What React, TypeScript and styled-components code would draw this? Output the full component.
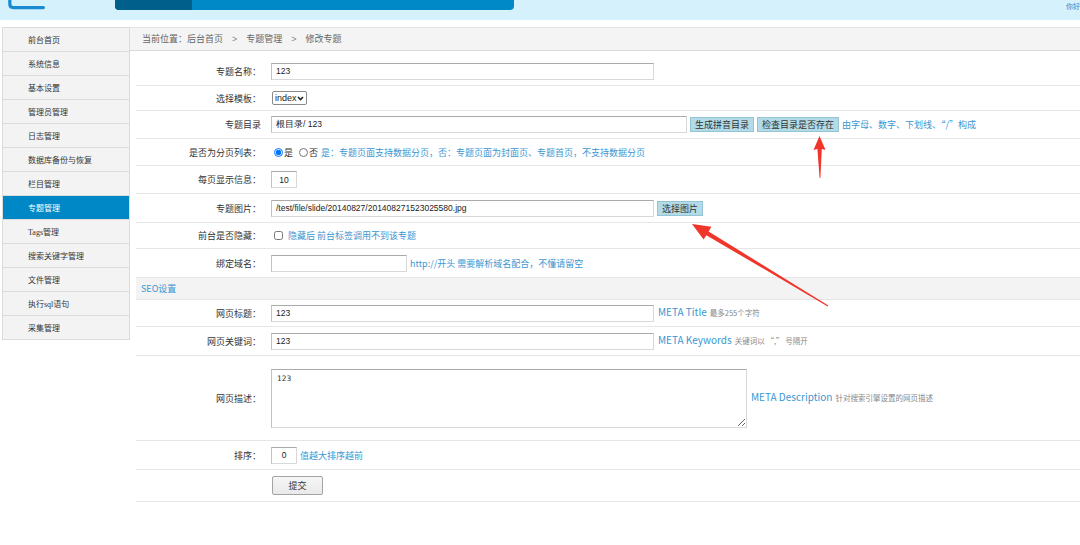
import React from "react";
import styled, { createGlobalStyle } from "styled-components";

const GlobalStyle = createGlobalStyle`
  html, body { margin: 0; padding: 0; background: #fff; }
  body {
    font-family: "Noto Sans CJK SC", "Liberation Sans", sans-serif;
    color: #333;
    width: 1080px;
    height: 545px;
    overflow: hidden;
  }
  * { box-sizing: border-box; }
`;

const Page = styled.div`
  position: relative;
  width: 1080px;
  height: 545px;
  overflow: hidden;
`;

const Header = styled.header`
  height: 20px;
  background: #d4f1fc;
  display: flex;
  align-items: flex-start;
`;

const Logo = styled.svg`
  margin-left: 8px;
  flex: none;
`;

const NavBar = styled.div`
  margin-left: 67px;
  width: 399px;
  height: 10px;
  background: #0089c7;
  border-radius: 0 0 4px 4px;
  display: flex;
  overflow: hidden;
`;

const NavActive = styled.div`
  width: 77px;
  background: #005f8b;
`;

const Greeting = styled.div`
  margin-left: auto;
  padding-top: 1px;
  white-space: nowrap;
  font-size: 7px;
  line-height: 10px;
  color: #3b7fc4;
`;

const Body = styled.div`
  display: flex;
  align-items: flex-start;
  margin-top: 7px;
`;

const Sidebar = styled.nav`
  margin-left: 2px;
  width: 128px;
  flex: none;
  border: 1px solid #dcdcdc;
  border-bottom: none;
  background: #f3f3f3;
`;

const SideItem = styled.div<{ $active?: boolean }>`
  height: 24px;
  line-height: 23px;
  padding-left: 25px;
  font-size: 8px;
  border-bottom: 1px solid #dcdcdc;
  background: ${(p) => (p.$active ? "#0088c6" : "#f3f3f3")};
  color: ${(p) => (p.$active ? "#fff" : "#333")};
`;

const Latin = styled.span`
  font-family: "Liberation Serif", serif;
  font-size: 8px;
`;

const Main = styled.main`
  flex: 1;
  min-width: 0;
`;

const Breadcrumb = styled.div`
  height: 24px;
  line-height: 22px;
  padding-left: 12px;
  background: #f4f4f4;
  border-top: 1px solid #e4e4e4;
  border-bottom: 1px solid #d9d9d9;
  font-size: 9px;
  color: #666;
`;

const Sep = styled.span`
  margin: 0 9px;
  font-family: "Liberation Sans", sans-serif;
  color: #888;
`;

const Form = styled.form`
  margin-left: 6px;
  padding-top: 6px;
`;

const Row = styled.div<{ $h: number }>`
  display: grid;
  grid-template-columns: 135px 1fr;
  align-items: center;
  height: ${(p) => p.$h}px;
  border-bottom: 1px solid #e6e6e6;
`;

const Label = styled.div`
  text-align: right;
  padding-right: 10px;
  font-size: 9px;
  color: #333;
`;

const Field = styled.div`
  display: flex;
  align-items: center;
  gap: 3px;
  white-space: nowrap;
`;

const SectionHead = styled.div`
  height: 22px;
  line-height: 21px;
  padding-left: 5px;
  background: #f3f3f3;
  border-bottom: 1px solid #e6e6e6;
  font-size: 9px;
  color: #3b96d2;
`;

const TextInput = styled.input<{ $w: number; $center?: boolean }>`
  width: ${(p) => p.$w}px;
  height: 17px;
  padding: 0 4px;
  border: 1px solid #d8d8d8;
  border-top-color: #aaaaaa;
  border-left-color: #c2c2c2;
  font-family: "Liberation Sans", sans-serif;
  font-size: 8.5px;
  color: #222;
  text-align: ${(p) => (p.$center ? "center" : "left")};
  background: #fff;
  outline: none;
`;

const TextArea = styled.textarea`
  width: 476px;
  height: 59px;
  padding: 4px 5px;
  border: 1px solid #d8d8d8;
  border-top-color: #aaaaaa;
  border-left-color: #c2c2c2;
  font-family: "DejaVu Sans", sans-serif;
  font-size: 7.5px;
  color: #333;
  resize: both;
  outline: none;
`;

const SelectBox = styled.div`
  margin-left: 1px;
  width: 35px;
  height: 14px;
  display: flex;
  align-items: center;
  border: 1px solid #8a8a8a;
  border-radius: 2px;
  background: #fff;
  padding-right: 2px;
`;

const Select = styled.select`
  appearance: none;
  -webkit-appearance: none;
  flex: 1;
  min-width: 0;
  height: 12px;
  padding: 0 0 0 2px;
  border: none;
  background: transparent;
  font-family: "Liberation Sans", sans-serif;
  font-size: 9px;
  line-height: 12px;
  color: #222;
  outline: none;
`;

const BlueButton = styled.button`
  height: 15px;
  padding: 0 4px;
  background: #b2dbe7;
  border: 1px solid #93c5d5;
  font-family: "Noto Sans CJK SC", sans-serif;
  font-size: 9px;
  line-height: 13px;
  color: #333;
`;

const SubmitButton = styled.button`
  margin-left: 1px;
  width: 51px;
  height: 19px;
  background: linear-gradient(#f6f6f6, #e9e9e9);
  border: 1px solid #a3a3a3;
  border-radius: 2px;
  font-family: "Noto Sans CJK SC", sans-serif;
  font-size: 9px;
  color: #333;
`;

const Hint = styled.span`
  font-size: 9px;
  color: #3b96d2;
`;

const MetaHint = styled.span`
  display: flex;
  align-items: baseline;
  line-height: 1;
  margin-top: -3px;
`;

const Meta = styled.span`
  font-size: 10px;
  color: #3b96d2;
  margin-left: 1px;
`;

const Note = styled.span`
  font-size: 7.5px;
  color: #888;
  margin-left: 3px;
`;

const Choice = styled.label`
  display: flex;
  align-items: center;
  gap: 1px;
  font-size: 9px;
  color: #333;
`;

const Radio = styled.input`
  width: 9px;
  height: 9px;
  margin: 0 0 0 3px;
`;

const Check = styled.input`
  width: 9px;
  height: 9px;
  margin: 0 2px 0 3px;
`;

const Annotations = styled.svg`
  position: absolute;
  left: 0;
  top: 0;
  pointer-events: none;
`;

const menu = [
  "前台首页",
  "系统信息",
  "基本设置",
  "管理员管理",
  "日志管理",
  "数据库备份与恢复",
  "栏目管理",
  "专题管理",
  "TAGS",
  "搜索关键字管理",
  "文件管理",
  "SQL",
  "采集管理",
];

function MenuText({ text }: { text: string }) {
  if (text === "TAGS")
    return (
      <>
        <Latin>Tags</Latin>管理
      </>
    );
  if (text === "SQL")
    return (
      <>
        执行<Latin>sql</Latin>语句
      </>
    );
  return <>{text}</>;
}

export default function App() {
  return (
    <Page>
      <GlobalStyle />
      <Header>
        <Logo width="40" height="10" viewBox="0 0 40 10">
          <path
            d="M1.8 -2 V4 Q1.8 7.6 5.4 7.6 H35.4"
            fill="none"
            stroke="#1a8bd1"
            strokeWidth="3.2"
            strokeLinecap="round"
          />
        </Logo>
        <NavBar>
          <NavActive />
        </NavBar>
        <Greeting>你好</Greeting>
      </Header>
      <Body>
        <Sidebar>
          {menu.map((m) => (
            <SideItem key={m} $active={m === "专题管理"}>
              <MenuText text={m} />
            </SideItem>
          ))}
        </Sidebar>
        <Main>
          <Breadcrumb>
            当前位置：后台首页<Sep>&gt;</Sep>专题管理<Sep>&gt;</Sep>修改专题
          </Breadcrumb>
          <Form onSubmit={(e) => e.preventDefault()}>
            <Row $h={29}>
              <Label>专题名称：</Label>
              <Field>
                <TextInput $w={383} defaultValue="123" />
              </Field>
            </Row>
            <Row $h={25}>
              <Label>选择模板：</Label>
              <Field>
                <SelectBox>
                  <Select defaultValue="index">
                    <option value="index">index</option>
                  </Select>
                  <svg width="7" height="5" viewBox="0 0 7 5">
                    <path d="M1 1 L3.5 3.6 L6 1" fill="none" stroke="#222" strokeWidth="1.5" />
                  </svg>
                </SelectBox>
              </Field>
            </Row>
            <Row $h={28}>
              <Label>专题目录</Label>
              <Field>
                <TextInput $w={416} defaultValue="根目录/ 123" />
                <BlueButton type="button">生成拼音目录</BlueButton>
                <BlueButton type="button">检查目录是否存在</BlueButton>
                <Hint>由字母、数字、下划线、“/”构成</Hint>
              </Field>
            </Row>
            <Row $h={27}>
              <Label>是否为分页列表：</Label>
              <Field>
                <Choice>
                  <Radio type="radio" name="paged" defaultChecked />是
                </Choice>
                <Choice>
                  <Radio type="radio" name="paged" />否
                </Choice>
                <Hint>是：专题页面支持数据分页，否：专题页面为封面页、专题首页，不支持数据分页</Hint>
              </Field>
            </Row>
            <Row $h={28}>
              <Label>每页显示信息：</Label>
              <Field>
                <TextInput $w={26} $center defaultValue="10" />
              </Field>
            </Row>
            <Row $h={29}>
              <Label>专题图片：</Label>
              <Field>
                <TextInput $w={383} defaultValue="/test/file/slide/20140827/201408271523025580.jpg" />
                <BlueButton type="button">选择图片</BlueButton>
              </Field>
            </Row>
            <Row $h={26}>
              <Label>前台是否隐藏：</Label>
              <Field>
                <Check type="checkbox" />
                <Hint>隐藏后 前台标签调用不到该专题</Hint>
              </Field>
            </Row>
            <Row $h={29}>
              <Label>绑定域名：</Label>
              <Field>
                <TextInput $w={136} defaultValue="" />
                <Hint>http://开头 需要解析域名配合，不懂请留空</Hint>
              </Field>
            </Row>
            <SectionHead>SEO设置</SectionHead>
            <Row $h={27}>
              <Label>网页标题：</Label>
              <Field>
                <TextInput $w={383} defaultValue="123" />
                <MetaHint>
                  <Meta>META Title</Meta>
                  <Note>最多255个字符</Note>
                </MetaHint>
              </Field>
            </Row>
            <Row $h={29}>
              <Label>网页关键词：</Label>
              <Field>
                <TextInput $w={383} defaultValue="123" />
                <MetaHint>
                  <Meta>META Keywords</Meta>
                  <Note>关键词以 “,” 号隔开</Note>
                </MetaHint>
              </Field>
            </Row>
            <Row $h={85}>
              <Label>网页描述：</Label>
              <Field>
                <TextArea defaultValue="123" />
                <MetaHint>
                  <Meta>META Description</Meta>
                  <Note>针对搜索引擎设置的网页描述</Note>
                </MetaHint>
              </Field>
            </Row>
            <Row $h={29}>
              <Label>排序：</Label>
              <Field>
                <TextInput $w={26} $center defaultValue="0" />
                <Hint>值越大排序越前</Hint>
              </Field>
            </Row>
            <Row $h={32}>
              <Label />
              <Field>
                <SubmitButton type="submit">提交</SubmitButton>
              </Field>
            </Row>
          </Form>
        </Main>
      </Body>
      <Annotations width="1080" height="545" viewBox="0 0 1080 545">
        <polygon
          points="819.6,178 820.4,178 821.8,149 825.5,150 819.5,136 813.5,150 817.4,149"
          fill="#f0362b"
        />
        <polygon
          points="828.3,305.6 708.6,231.4 711.4,226.8 692,224 703.6,239.6 706.3,235.2 827.7,306.4"
          fill="#f0362b"
        />
      </Annotations>
    </Page>
  );
}
